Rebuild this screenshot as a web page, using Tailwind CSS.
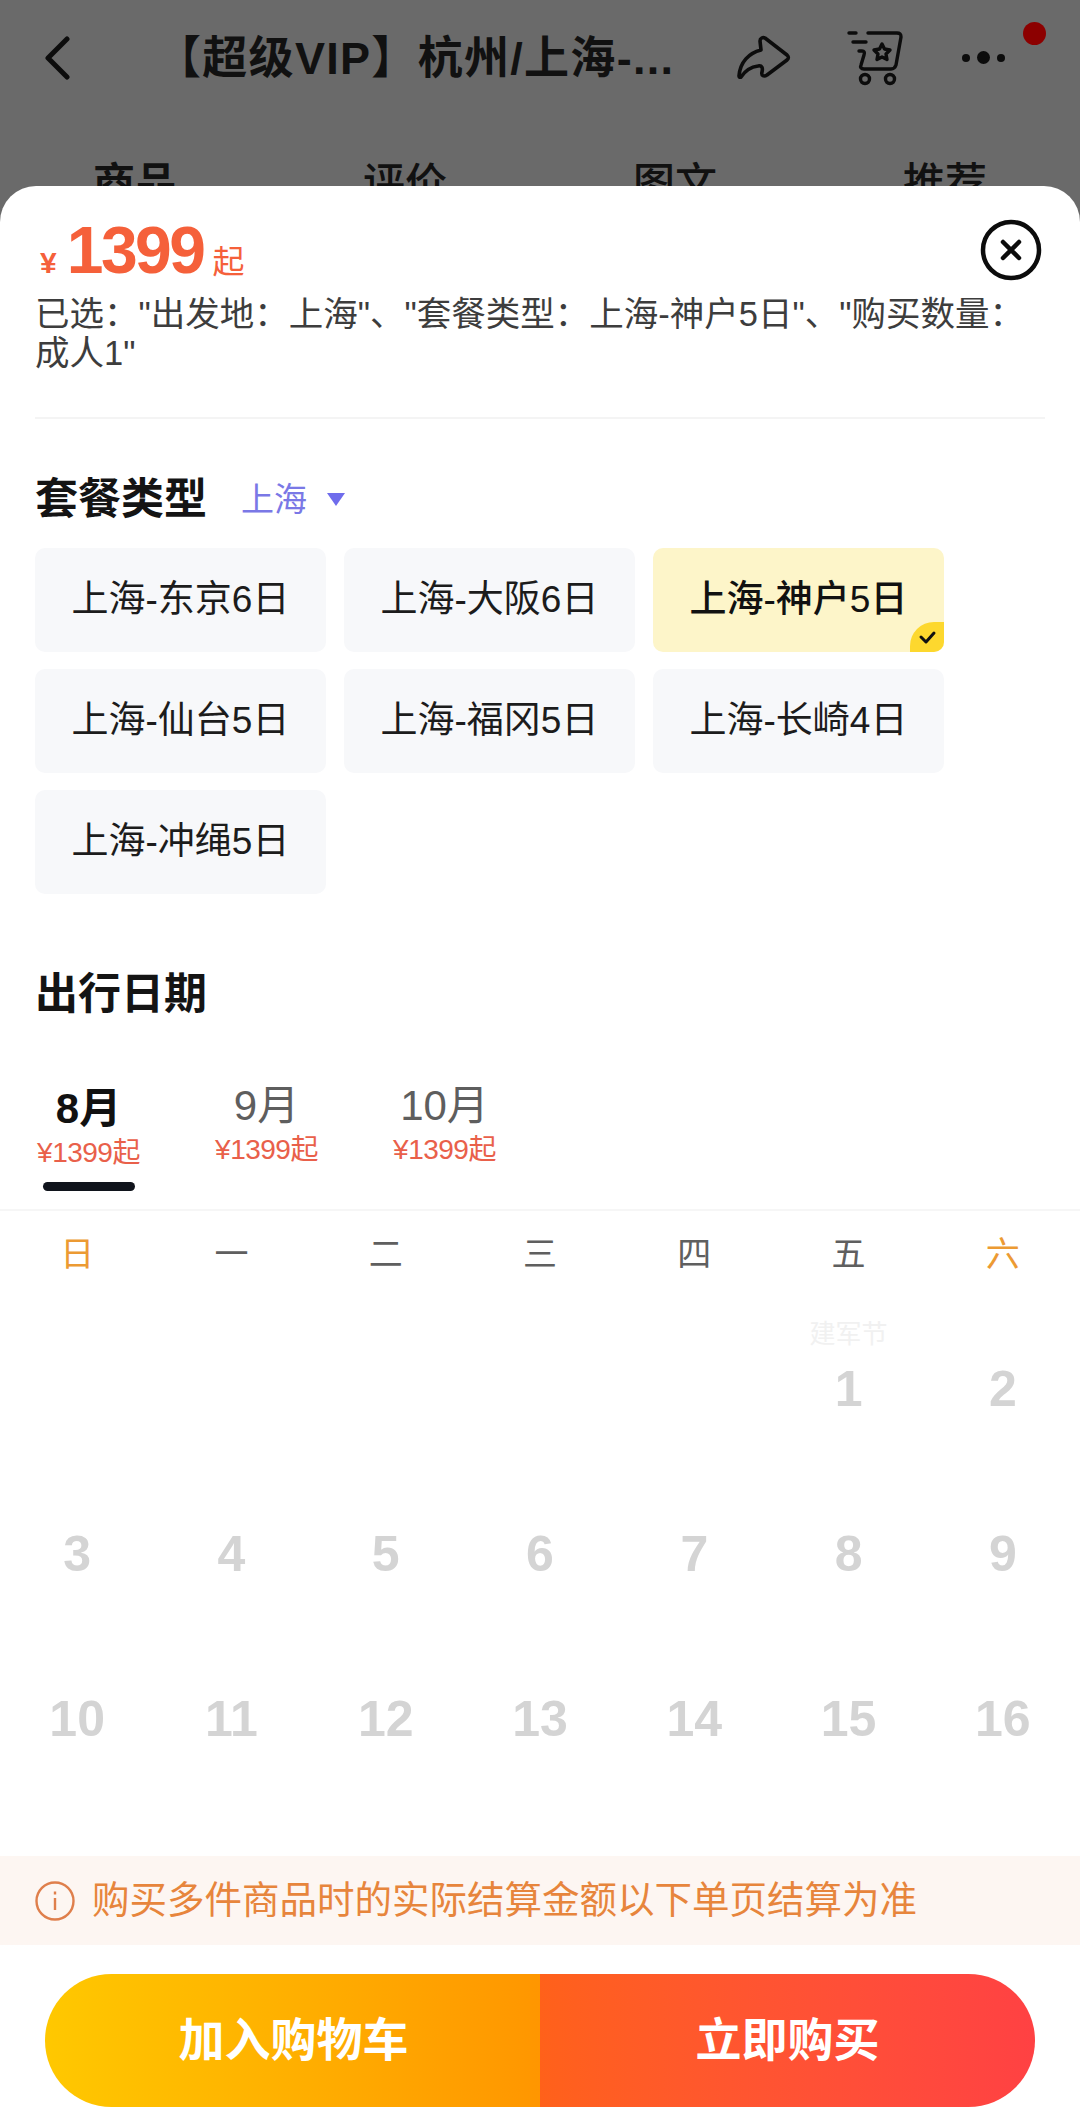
<!DOCTYPE html>
<html lang="zh-CN">
<head>
    <meta charset="UTF-8">
    <meta name="viewport" content="width=device-width, initial-scale=1.0">
    <title>套餐选择</title>
    <script src="https://cdn.jsdelivr.net/npm/@tailwindcss/browser@4"></script>
</head>
<body class="relative w-[1080px] h-[2125px] overflow-hidden bg-[#6a6a6a] font-['Liberation_Sans','Noto_Sans_CJK_SC',sans-serif]">
    <!-- page behind the sheet -->
    <header class="relative flex items-center h-[116px] text-[#111]">
        <svg class="ml-[44px] w-[26px] h-[44px]" viewBox="0 0 26 44" fill="none" stroke="#0c0c0c" stroke-width="5" stroke-linecap="round" stroke-linejoin="round"><path d="M23 3 4 22l19 19"/></svg>
        <h1 class="ml-[86px] w-[530px] text-[45px] tracking-[1.3px] font-bold whitespace-nowrap leading-none">【超级VIP】杭州/上海-...</h1>
        <svg class="absolute left-[737px] top-[35px] w-[54px] h-[44px]" viewBox="0 0 54 44" fill="none" stroke="#0c0c0c" stroke-width="3.6" stroke-linejoin="round" stroke-linecap="round"><path d="M2 41C3 27 12 18 24 15L23 6c0-3 3-4 5-3l22 17c2 2 2 3 0 5L30 40c-3 2-6 1-5-3 1-4 0-7-4-6-8 1-13 5-17 11-1 1-2 0-2-1Z"/></svg>
        <svg class="absolute left-[847px] top-[31px] w-[58px] h-[55px]" viewBox="0 0 58 55" fill="none" stroke="#0c0c0c" stroke-width="3.4" stroke-linecap="round" stroke-linejoin="round">
            <path d="M2 2h7M21 2h29c4 0 4 2 4 4l-5 28c-1 3-2 4-5 4H17c-3 0-4-2-3-4l3-10c1-3 0-4-2-4h-3M6 11h13"/>
            <path d="m35 13 2.500 5 5.500 1-4 4 1 5.500-5-2.500-5 2.500 1-5.500-4-4 5.500-1Z"/>
            <circle cx="18" cy="48" r="4.500"/><circle cx="43" cy="48" r="4.500"/>
        </svg>
        <div class="absolute left-[962px] top-[51px] flex items-center gap-[7px]">
            <span class="w-[8px] h-[8px] rounded-full bg-[#0c0c0c]"></span>
            <span class="w-[13px] h-[13px] rounded-full bg-[#0c0c0c]"></span>
            <span class="w-[8px] h-[8px] rounded-full bg-[#0c0c0c]"></span>
        </div>
        <span class="absolute left-[1023px] top-[22px] w-[23px] h-[23px] rounded-full bg-[#8c0000]"></span>
    </header>
    <nav class="grid grid-cols-4 text-center text-[42px] leading-none pt-[47px] font-medium text-[#111]">
        <span class="font-bold">商品</span><span>评价</span><span>图文</span><span>推荐</span>
    </nav>

    <!-- bottom sheet -->
    <section class="absolute left-0 right-0 top-[186px] bottom-0 bg-white rounded-t-[36px] flex flex-col">
        <div class="px-[35px]">
            <div class="relative flex items-baseline h-[94px] pt-[31px] text-[#f5603a]">
                <span class="text-[30px] font-bold ml-[5px] mr-[10px]">¥</span>
                <span class="text-[66px] leading-[66px] font-bold tracking-[-2.5px]">1399</span>
                <span class="text-[32px] ml-[9px]">起</span>
                <svg class="absolute right-[3px] top-[33px] w-[62px] h-[62px]" viewBox="0 0 62 62" fill="none" stroke="#0c0c0c" stroke-width="4.5" stroke-linecap="round"><circle cx="31" cy="31" r="28"/><path d="m23 23 16 16M39 23 23 39"/></svg>
            </div>
            <p class="mt-[15px] w-[1022px] text-[34.5px] leading-[39px] text-[#3d3d3d]">已选："出发地：上海"、"套餐类型：上海-神户5日"、"购买数量：成人1"</p>
            <div class="mt-[44px] h-[2px] bg-[#f4f4f4]"></div>

            <div class="mt-[58px] flex items-center h-[44px]">
                <h2 class="text-[43px] leading-none font-bold text-[#141414]">套餐类型</h2>
                <span class="ml-[34px] text-[33px] leading-none text-[#7a78e6]">上海</span>
                <span class="ml-[20px] w-0 h-0 border-x-[9px] border-x-transparent border-t-[13px] border-t-[#6f6cec]"></span>
            </div>
            <div class="mt-[27px] grid grid-cols-[291px_291px_291px] gap-x-[18px] gap-y-[17px] text-[37px] text-[#1c1c1c]">
                <div class="h-[104px] rounded-[10px] bg-[#f7f8fa] flex items-center justify-center">上海-东京6日</div>
                <div class="h-[104px] rounded-[10px] bg-[#f7f8fa] flex items-center justify-center">上海-大阪6日</div>
                <div class="relative overflow-hidden h-[104px] rounded-[10px] bg-[#fdf5c9] flex items-center justify-center font-medium text-[#111]">
                    上海-神户5日
                    <span class="absolute right-0 bottom-0 w-[34px] h-[30px] rounded-tl-[24px] bg-[#fdd82e] flex items-center justify-center">
                        <svg class="w-[19px] h-[15px]" viewBox="0 0 19 15" fill="none" stroke="#111" stroke-width="3" stroke-linecap="round" stroke-linejoin="round"><path d="m3 7 5 5 8-9"/></svg>
                    </span>
                </div>
                <div class="h-[104px] rounded-[10px] bg-[#f7f8fa] flex items-center justify-center">上海-仙台5日</div>
                <div class="h-[104px] rounded-[10px] bg-[#f7f8fa] flex items-center justify-center">上海-福冈5日</div>
                <div class="h-[104px] rounded-[10px] bg-[#f7f8fa] flex items-center justify-center">上海-长崎4日</div>
                <div class="h-[104px] rounded-[10px] bg-[#f7f8fa] flex items-center justify-center">上海-冲绳5日</div>
            </div>

            <h2 class="mt-[78px] text-[43px] leading-[44px] font-bold text-[#141414]">出行日期</h2>
        </div>

        <div class="flex pl-[34px] mt-[68px] h-[125px]">
            <div class="relative w-[109px] text-center">
                <div class="pt-[3px] text-[42px] leading-[44px] font-semibold text-[#111]">8月</div>
                <div class="mt-[6px] text-[28px] leading-[32px] tracking-[-0.5px] text-[#e9604a] whitespace-nowrap">¥1399起</div>
                <span class="absolute left-[9px] top-[98px] w-[92px] h-[9px] rounded-full bg-[#10141c]"></span>
            </div>
            <div class="ml-[69px] w-[109px] text-center">
                <div class="text-[42px] leading-[44px] text-[#5e5e5e]">9月</div>
                <div class="mt-[6px] text-[28px] leading-[32px] tracking-[-0.5px] text-[#e9604a] whitespace-nowrap">¥1399起</div>
            </div>
            <div class="ml-[69px] w-[109px] text-center">
                <div class="text-[42px] leading-[44px] text-[#5e5e5e]">10月</div>
                <div class="mt-[6px] text-[28px] leading-[32px] tracking-[-0.5px] text-[#e9604a] whitespace-nowrap">¥1399起</div>
            </div>
        </div>
        <div class="h-[2px] bg-[#f6f6f6]"></div>

        <div class="grid grid-cols-7 text-center text-[34px] leading-[40px] text-[#5f5f5f] pt-[23px]">
            <span class="text-[#ec9a33]">日</span><span>一</span><span>二</span><span>三</span><span>四</span><span>五</span><span class="text-[#ec9a33]">六</span>
        </div>
        <div class="grid grid-cols-7 auto-rows-[165px] text-center text-[50px] font-semibold text-[#d4d4d4] mt-[44px]">
            <span></span><span></span><span></span><span></span><span></span>
            <div class="flex flex-col items-center"><span class="text-[26px] leading-[32px] font-normal text-[#f1f1f1]">建军节</span><span class="mt-[12px] leading-[54px]">1</span></div>
            <div class="pt-[44px] leading-[54px]">2</div>
            <div class="pt-[44px] leading-[54px]">3</div><div class="pt-[44px] leading-[54px]">4</div><div class="pt-[44px] leading-[54px]">5</div><div class="pt-[44px] leading-[54px]">6</div><div class="pt-[44px] leading-[54px]">7</div><div class="pt-[44px] leading-[54px]">8</div><div class="pt-[44px] leading-[54px]">9</div>
            <div class="pt-[44px] leading-[54px]">10</div><div class="pt-[44px] leading-[54px]">11</div><div class="pt-[44px] leading-[54px]">12</div><div class="pt-[44px] leading-[54px]">13</div><div class="pt-[44px] leading-[54px]">14</div><div class="pt-[44px] leading-[54px]">15</div><div class="pt-[44px] leading-[54px]">16</div>
        </div>

        <div class="mt-auto h-[89px] bg-[#fdf6f2] flex items-center pl-[35px] text-[37.5px] text-[#e7853c]">
            <svg class="w-[40px] h-[40px] mr-[17px]" viewBox="0 0 40 40" fill="none" stroke="#df7f4c" stroke-width="2.4"><circle cx="20" cy="20" r="18.5"/><path d="M20 17v12M20 10.5v3"/></svg>
            购买多件商品时的实际结算金额以下单页结算为准
        </div>
        <div class="mx-[45px] mt-[29px] mb-[18px] h-[133px] rounded-full overflow-hidden flex text-[46px] font-bold text-white">
            <button class="w-[495px] h-full bg-gradient-to-r from-[#ffc800] to-[#ff9600] pl-[2px]">加入购物车</button>
            <button class="w-[495px] h-full bg-gradient-to-r from-[#ff611a] to-[#ff4143]">立即购买</button>
        </div>
    </section>
</body>
</html>
